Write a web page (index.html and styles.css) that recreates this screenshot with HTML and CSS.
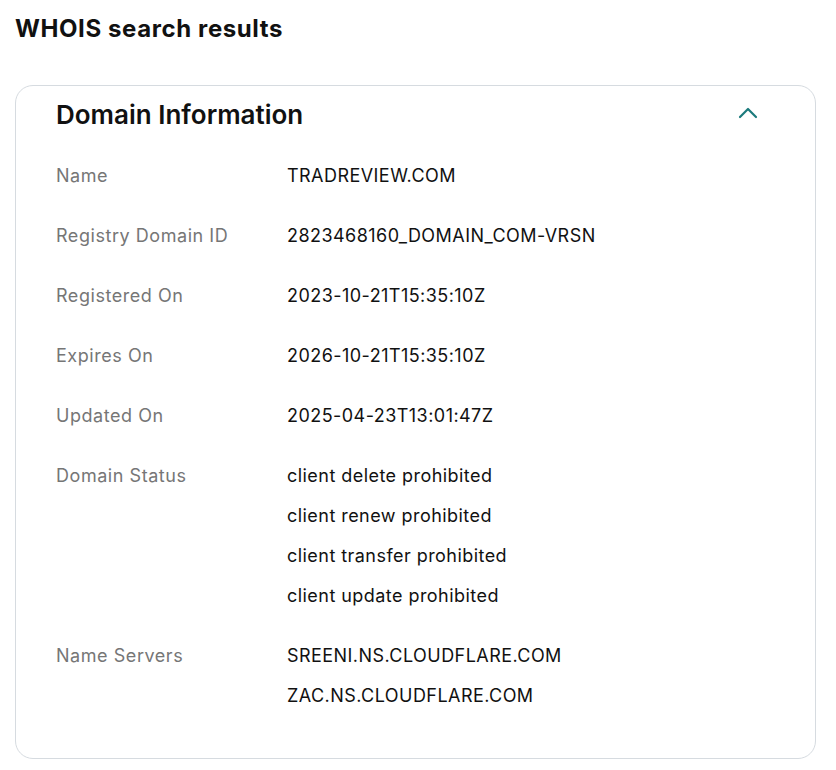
FILE: index.html
```html
<!DOCTYPE html>
<html>
<head>
<meta charset="utf-8">
<link rel="stylesheet" href="styles.css">
</head>
<body>
<div class="page">
  <h1 class="page-title">WHOIS search results</h1>
  <section class="card">
    <div class="card-head">
      <h2 class="card-title">Domain Information</h2>
      <button class="toggle" aria-label="Collapse">
        <svg width="20" height="12" viewBox="0 0 20 12"><path d="M2 10 L10 2 L18 10" fill="none" stroke="#1b7a7c" stroke-width="2.2" stroke-linecap="round" stroke-linejoin="round"/></svg>
      </button>
    </div>
    <dl class="info">
      <div class="row"><dt>Name</dt><dd>TRADREVIEW.COM</dd></div>
      <div class="row"><dt>Registry Domain ID</dt><dd>2823468160_DOMAIN_COM-VRSN</dd></div>
      <div class="row"><dt>Registered On</dt><dd>2023-10-21T15:35:10Z</dd></div>
      <div class="row"><dt>Expires On</dt><dd>2026-10-21T15:35:10Z</dd></div>
      <div class="row"><dt>Updated On</dt><dd>2025-04-23T13:01:47Z</dd></div>
      <div class="row"><dt>Domain Status</dt><dd><span>client delete prohibited</span><span>client renew prohibited</span><span>client transfer prohibited</span><span>client update prohibited</span></dd></div>
      <div class="row"><dt>Name Servers</dt><dd><span>SREENI.NS.CLOUDFLARE.COM</span><span>ZAC.NS.CLOUDFLARE.COM</span></dd></div>
    </dl>
  </section>
</div>
</body>
</html>
```
FILE: styles.css
```css
html, body { margin: 0; padding: 0; background: #fff; }
body { font-family: Inter, "Noto Sans", "Liberation Sans", sans-serif; color: #111; }
.page { padding: 13px 20px 0 15px; }
.page-title { margin: 0; font-size: 24px; line-height: 32px; font-weight: 700; color: #111; letter-spacing: 0.6px; }
.card { margin-top: 40px; border: 1px solid #d6dbe0; border-radius: 18px; padding: 10px 57px 42px 40px; }
.card-head { display: flex; align-items: center; justify-content: space-between; height: 38px; }
.card-title { margin: 0; font-size: 26px; line-height: 38px; font-weight: 600; color: #111; letter-spacing: 0; }
.toggle { border: 0; background: none; padding: 0; width: 20px; height: 20px; display: flex; align-items: center; justify-content: center; margin-top: -4px; }
.info { margin: 22px 0 0; padding: 0; display: flex; flex-direction: column; gap: 20px; }
.row { display: flex; }
.row dt { width: 231px; flex: none; font-size: 18px; line-height: 40px; color: #767676; letter-spacing: 0.55px; }
.row dd { margin: 0; display: flex; flex-direction: column; font-size: 18px; line-height: 40px; color: #111; letter-spacing: 0.45px; }
```
